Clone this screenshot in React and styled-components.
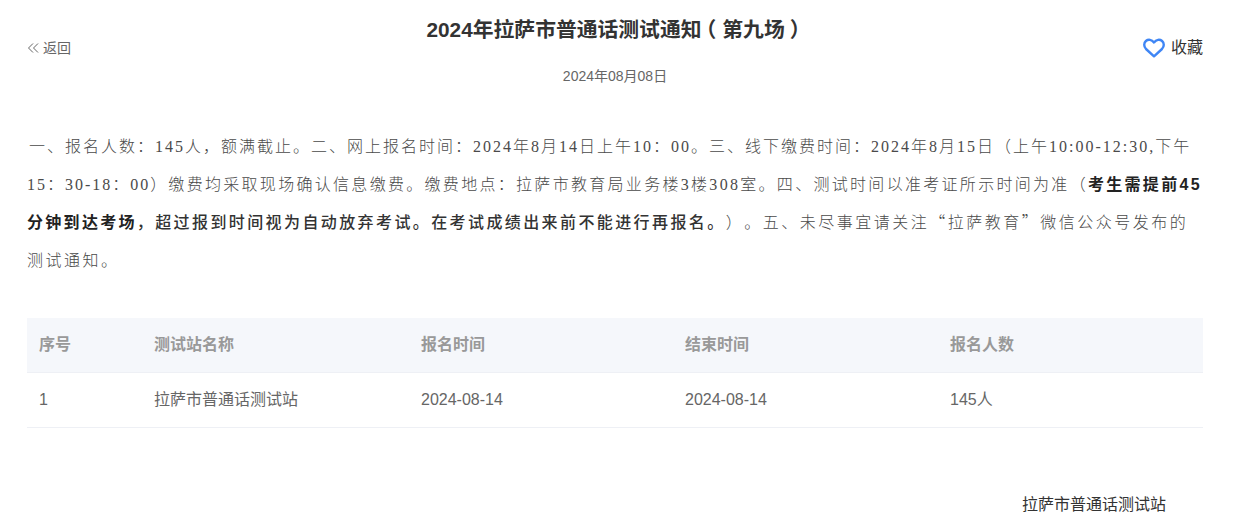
import React from 'react'
import styled, { createGlobalStyle } from 'styled-components'

const GlobalStyle = createGlobalStyle`
  html, body {
    margin: 0;
    padding: 0;
    background: #fff;
    font-family: "Liberation Sans", "Noto Sans CJK SC", sans-serif;
    text-spacing-trim: space-all;
  }
`

const Page = styled.div`
  width: 1234px;
  height: 523px;
  overflow: hidden;
  box-sizing: border-box;
  padding: 13px 31px 0 27px;
`

const Header = styled.header`
  display: grid;
  grid-template-columns: 1fr auto 1fr;
  align-items: center;
`

const BackLink = styled.a`
  display: flex;
  align-items: center;
  gap: 4px;
  margin-bottom: 2px;
  font-size: 14px;
  line-height: 18px;
  color: #666;
`

const TitleBlock = styled.div`
  text-align: center;
`

const Title = styled.h1`
  margin: 0;
  padding-left: 1px;
  font-size: 20.800px;
  line-height: 34px;
  font-weight: 700;
  white-space: nowrap;
  color: #333;
`

// the reference's full-width brackets sit in the middle of their cell
const TitleParen = styled.span`
  margin: ${props => props.$close ? '0 -6px 0 5px' : '0 6px 0 -6px'};
`

const PublishDate = styled.div`
  margin-top: 20px;
  font-size: 14px;
  line-height: 18px;
  color: #666;
`

const Favorite = styled.a`
  justify-self: end;
  display: flex;
  align-items: center;
  gap: 6px;
  margin-bottom: 2px;
  font-size: 16px;
  line-height: 22px;
  color: #333;
`

const Article = styled.div`
  margin-top: 43px;
  text-indent: 2px;
  font-family: "Liberation Serif", "Noto Sans CJK SC", serif;
  font-size: 16px;
  line-height: 38px;
  letter-spacing: 2.500px;
  font-weight: 300;
  color: #4a4a4a;
`

const Passage = styled.span`
  letter-spacing: ${props => props.$spacing};
`

const Quote = styled.span`
  font-family: "Noto Sans CJK SC", sans-serif;
  line-height: 0;
`

const Strong = styled.strong`
  font-family: "Liberation Sans", "Noto Sans CJK SC", sans-serif;
  font-weight: 700;
  letter-spacing: 2.300px;
  line-height: 0;
  color: #222;
`

const Emphasis = styled.span`
  font-weight: 500;
  letter-spacing: 2.400px;
  color: #333;
`

const Table = styled.div`
  margin-top: 38px;
  font-size: 16px;
  line-height: 20px;
`

const Row = styled.div`
  display: grid;
  grid-template-columns: 127px 267px 264px 265px 1fr;
  align-items: center;
  box-sizing: border-box;
  height: 55px;
  border-bottom: 1px solid #eef0f5;
  background: ${props => props.$head ? '#f5f7fb' : '#fff'};
  color: ${props => props.$head ? '#999' : '#666'};
  font-weight: ${props => props.$head ? 700 : 400};
`

const Cell = styled.div`
  padding-left: ${props => props.$first ? '12px' : '0'};
`

const Source = styled.div`
  margin-top: 66px;
  padding-right: 37px;
  text-align: right;
  font-size: 16px;
  line-height: 22px;
  color: #333;
`

const HEAD = ['序号', '测试站名称', '报名时间', '结束时间', '报名人数']
const ROWS = [['1', '拉萨市普通话测试站', '2024-08-14', '2024-08-14', '145人']]

const TableRow = ({ cells, head }) => (
  <Row $head={head}>
    {cells.map((text, i) => <Cell key={i} $first={i === 0}>{text}</Cell>)}
  </Row>
)

export default function App() {
  return (
    <Page>
      <GlobalStyle />
      <Header>
        <BackLink>
          <svg width="12" height="10" viewBox="0 0 12 10" fill="none" stroke="#666" strokeWidth="1">
            <path d="M6 .5 1.500 5 6 9.500M11 .5 6.500 5 11 9.500" />
          </svg>
          返回
        </BackLink>
        <TitleBlock>
          <Title>2024年拉萨市普通话测试通知<TitleParen>（</TitleParen>第九场<TitleParen $close>）</TitleParen></Title>
          <PublishDate>2024年08月08日</PublishDate>
        </TitleBlock>
        <Favorite>
          <svg width="22" height="20" viewBox="0 0 22 20" fill="none" stroke="#3f86f5" strokeWidth="2.400" strokeLinejoin="round">
            <path d="M11 18.300 3 11C.6 8.600.7 4.900 2.900 3 5.200 1.100 8.700 1.400 11 4.400 13.300 1.400 16.800 1.100 19.100 3 21.300 4.900 21.400 8.600 19 11Z" />
          </svg>
          收藏
        </Favorite>
      </Header>
      <Article>
        <Passage $spacing="2px">一、报名人数：145人，额满截止。二、网上报名时间：2024年8月14日上午10：00。三、线下缴费时间：2024年8月15日（上午10:00-12:30,下午15：30-18：00）</Passage>
        <Passage $spacing="2.300px">缴费均采取现场确认信息缴费。缴费地点：拉萨市教育局业务楼3楼308室。四、测试时间以准考证所示时间为准（</Passage>
        <Strong>考生需提前45分钟到达考场</Strong>
        <Emphasis>，超过报到时间视为自动放弃考试。在考试成绩出来前不能进行再报名。</Emphasis>）。五、未尽事宜请关注<Quote>“</Quote>拉萨教育<Quote>”</Quote>微信公众号发布的测试通知。
      </Article>
      <Table>
        <TableRow cells={HEAD} head />
        {ROWS.map(row => <TableRow key={row[0]} cells={row} />)}
      </Table>
      <Source>拉萨市普通话测试站</Source>
    </Page>
  )
}
